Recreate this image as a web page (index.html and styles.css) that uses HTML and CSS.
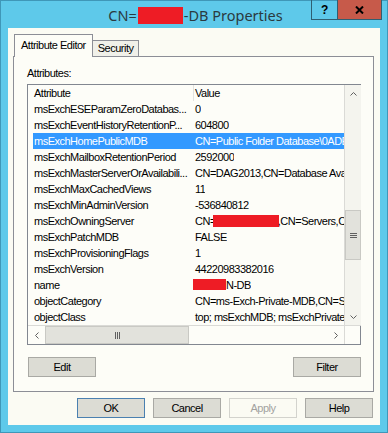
FILE: index.html
```html
<!DOCTYPE html>
<html lang="en">
<head>
    <meta charset="UTF-8">
    <title>CN=-DB Properties</title>
    <link rel="stylesheet" href="styles.css">
</head>
<body>
    <div class="window">
        <div class="titlebar">
            <div></div>
            <div class="title">CN=<span class="redact title-redact"></span>-DB Properties</div>
            <div class="caption-btns">
                <span class="cap cap-help">?</span>
                <span class="cap cap-close">
                    <svg width="9" height="8" viewBox="0 0 9 8"><path d="M1 0.5 L8 7.5 M8 0.5 L1 7.5" stroke="#000" stroke-width="2"/></svg>
                </span>
            </div>
        </div>

        <div class="client">
            <div class="tabs">
                <div class="tab active">Attribute Editor</div>
                <div class="tab">Security</div>
            </div>

            <div class="panel">
                <div class="label">Attributes:</div>

                <div class="list">
                    <div class="list-main">
                        <div class="list-head">
                            <div class="col-attr">Attribute</div>
                            <div class="col-val">Value</div>
                        </div>
                        <div class="row"><div class="col-attr">msExchESEParamZeroDatabas...</div><div class="col-val">0</div></div>
                        <div class="row"><div class="col-attr">msExchEventHistoryRetentionP...</div><div class="col-val">604800</div></div>
                        <div class="row selected"><div class="col-attr">msExchHomePublicMDB</div><div class="col-val">CN=Public Folder Database\0ADEL:2b1c</div></div>
                        <div class="row"><div class="col-attr">msExchMailboxRetentionPeriod</div><div class="col-val">2592000</div></div>
                        <div class="row"><div class="col-attr">msExchMasterServerOrAvailabili...</div><div class="col-val">CN=DAG2013,CN=Database Availability Groups</div></div>
                        <div class="row"><div class="col-attr">msExchMaxCachedViews</div><div class="col-val">11</div></div>
                        <div class="row"><div class="col-attr">msExchMinAdminVersion</div><div class="col-val">-536840812</div></div>
                        <div class="row"><div class="col-attr">msExchOwningServer</div><div class="col-val">CN=<span class="redact owner-redact"></span>,CN=Servers,CN=Exchange</div></div>
                        <div class="row"><div class="col-attr">msExchPatchMDB</div><div class="col-val">FALSE</div></div>
                        <div class="row"><div class="col-attr">msExchProvisioningFlags</div><div class="col-val">1</div></div>
                        <div class="row"><div class="col-attr">msExchVersion</div><div class="col-val">44220983382016</div></div>
                        <div class="row"><div class="col-attr">name</div><div class="col-val"><span class="redact name-redact"></span>N-DB</div></div>
                        <div class="row"><div class="col-attr">objectCategory</div><div class="col-val">CN=ms-Exch-Private-MDB,CN=Schema,CN=Configuration</div></div>
                        <div class="row"><div class="col-attr">objectClass</div><div class="col-val">top; msExchMDB; msExchPrivateMDB</div></div>
                    </div>

                    <div class="vscroll">
                        <div class="arrow">
                            <svg width="7" height="4" viewBox="0 0 7 4"><path d="M0.5 3.5 L3.5 0.5 L6.5 3.5" fill="none" stroke="#606060"/></svg>
                        </div>
                        <div class="track">
                            <div class="vthumb">
                                <svg width="7" height="5" viewBox="0 0 7 5"><path d="M0 0.5 H7 M0 2.5 H7 M0 4.5 H7" stroke="#606060"/></svg>
                            </div>
                        </div>
                        <div class="arrow">
                            <svg width="7" height="4" viewBox="0 0 7 4"><path d="M0.5 0.5 L3.5 3.5 L6.5 0.5" fill="none" stroke="#606060"/></svg>
                        </div>
                    </div>

                    <div class="hscroll">
                        <div class="arrow">
                            <svg width="4" height="7" viewBox="0 0 4 7"><path d="M3.5 0.5 L0.5 3.5 L3.5 6.5" fill="none" stroke="#606060"/></svg>
                        </div>
                        <div class="htrack">
                            <div class="hthumb">
                                <svg width="5" height="7" viewBox="0 0 5 7"><path d="M0.5 0 V7 M2.5 0 V7 M4.5 0 V7" stroke="#606060"/></svg>
                            </div>
                        </div>
                        <div class="arrow">
                            <svg width="4" height="7" viewBox="0 0 4 7"><path d="M0.5 0.5 L3.5 3.5 L0.5 6.5" fill="none" stroke="#606060"/></svg>
                        </div>
                    </div>
                    <div class="corner"></div>
                </div>

                <div class="panel-btns">
                    <button class="btn">Edit</button>
                    <button class="btn">Filter</button>
                </div>
            </div>

            <div class="dialog-btns">
                <button class="btn default">OK</button>
                <button class="btn">Cancel</button>
                <button class="btn disabled">Apply</button>
                <button class="btn">Help</button>
            </div>
        </div>
    </div>
</body>
</html>
```

FILE: styles.css
```css
body {
    margin: 0;
    background-color: #5ec9ea;
    font-family: "Liberation Sans", Arial, sans-serif;
    font-size: 11px;
    letter-spacing: -0.5px;
    color: #000;
}
.window {
    width: 388px;
    height: 433px;
    box-sizing: border-box;
    border: 1px solid #3f97b8;
    background-color: #5ec9ea;
}
.titlebar {
    display: grid;
    grid-template-columns: 1fr auto 1fr;
    height: 27px;
}
.title {
    font-family: "Noto Sans", sans-serif;
    font-size: 14.5px;
    letter-spacing: 0;
    color: #2b3a40;
    line-height: 29px;
    white-space: nowrap;
    padding-left: 3px;
}
.redact {
    display: inline-block;
    background-color: #ee1c25;
}
.title-redact {
    width: 45px;
    height: 17px;
    vertical-align: -3px;
    margin: 0 1px;
}
.caption-btns {
    display: flex;
    justify-content: flex-end;
    align-items: flex-start;
    margin-top: -1px;
    padding-right: 5px;
}
.cap {
    display: flex;
    align-items: center;
    justify-content: center;
    height: 19px;
    border: 1px solid #2f5f72;
    border-top: none;
    box-sizing: content-box;
}
.cap-help {
    width: 25px;
    border-right: none;
    font-family: "Liberation Sans", sans-serif;
    font-weight: bold;
    font-size: 12px;
}
.cap-close {
    width: 43px;
    background-color: #c75a4a;
}
.client {
    margin: 0 7px;
    height: 397px;
    box-sizing: border-box;
    background-color: #fbfbf3;
    padding: 7px 6px 0 5px;
}
.tabs {
    display: flex;
    align-items: flex-end;
    height: 21px;
    padding-left: 1px;
}
.tab {
    height: 15px;
    line-height: 15px;
    padding: 0 4px 0 5px;
    border: 1px solid #8c8e96;
    border-bottom: none;
    border-left: none;
    background-color: #f0f0e9;
}
.tab.active {
    position: relative;
    z-index: 1;
    height: 22px;
    line-height: 20px;
    margin-bottom: -1px;
    padding: 0 6px;
    border-left: 1px solid #8c8e96;
    background-color: #fdfdf7;
}
.panel {
    height: 336px;
    box-sizing: border-box;
    border: 1px solid #8c8e96;
    background-color: #fdfdf7;
    padding: 10px 12px 0 13px;
}
.label {
    line-height: 13px;
    margin-bottom: 4px;
}
.list {
    display: grid;
    grid-template-columns: 316px 17px;
    grid-template-rows: 240px 19px;
    border: 1px solid #828790;
    background-color: #fdfdf8;
}
.list-main {
    overflow: hidden;
}
.list-head {
    display: flex;
    height: 16px;
    line-height: 16px;
}
.list-head .col-attr {
    width: 159px;
    padding-left: 6px;
    border-right: 1px solid #e3e3e0;
}
.list-head .col-val {
    padding-left: 1px;
}
.row {
    display: flex;
    height: 16px;
    line-height: 16px;
    margin-left: 5px;
    white-space: nowrap;
}
.row .col-attr {
    width: 159px;
    flex: none;
    padding-left: 1px;
}
.row .col-val {
    padding-left: 2px;
    overflow: hidden;
}
.row.selected {
    background-color: #3399ff;
    color: #fff;
}
.owner-redact {
    width: 66px;
    height: 12px;
    vertical-align: -2px;
    margin-left: -3px;
    margin-right: -1px;
}
.name-redact {
    width: 34px;
    height: 11px;
    vertical-align: -1px;
    margin-left: -3px;
}
.vscroll {
    display: grid;
    grid-template-rows: 17px 1fr 17px;
    border-left: 1px solid #dadad6;
    background-color: #f4f4ee;
}
.arrow {
    display: flex;
    align-items: center;
    justify-content: center;
}
.vthumb {
    margin-top: 108px;
    height: 50px;
    box-sizing: border-box;
    border: 1px solid #c9c9c4;
    background-color: #e2e2dc;
    display: flex;
    align-items: center;
    justify-content: center;
}
.hscroll {
    display: grid;
    grid-template-columns: 17px 1fr 17px;
    border-top: 1px solid #dadad6;
    background-color: #fdfdf8;
}
.hthumb {
    width: 144px;
    height: 100%;
    box-sizing: border-box;
    border: 1px solid #c9c9c4;
    background-color: #e2e2dc;
    display: flex;
    align-items: center;
    justify-content: center;
}
.corner {
    border-left: 1px solid #dadad6;
    border-top: 1px solid #dadad6;
}
.btn {
    width: 68px;
    height: 20px;
    padding: 0;
    border: 1px solid #a9a9a4;
    background-color: #dcdcd4;
    font-family: "Liberation Sans", Arial, sans-serif;
    font-size: 11px;
    letter-spacing: -0.5px;
    color: #000;
}
.btn.default {
    border-color: #4a80b0;
}
.btn.disabled {
    border-color: #d3d3cd;
    background-color: #fbfbf3;
    color: #a2a2a0;
}
.panel-btns {
    display: flex;
    justify-content: space-between;
    margin-top: 12px;
    padding-left: 1px;
}
.dialog-btns {
    display: flex;
    justify-content: flex-end;
    gap: 8px;
    margin-top: 6px;
    padding-right: 1px;
}
```
